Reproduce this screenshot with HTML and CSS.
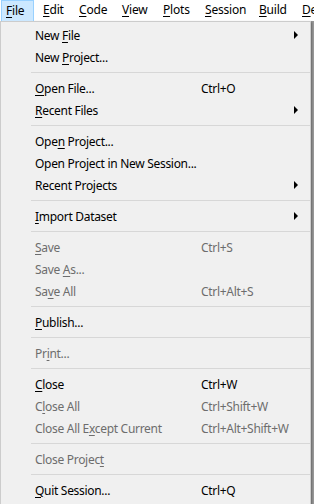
FILE: index.html
```html
<!DOCTYPE html>
<html>
<head>
<meta charset="utf-8">
<link rel="stylesheet" href="styles.css">
</head>
<body>
<div class="menubar">
  <div class="mi mi-file active"><u>F</u>ile</div>
  <div class="mi mi-edit"><u>E</u>dit</div>
  <div class="mi mi-code"><u>C</u>ode</div>
  <div class="mi mi-view"><u>V</u>iew</div>
  <div class="mi mi-plots"><u>P</u>lots</div>
  <div class="mi mi-session"><u>S</u>ession</div>
  <div class="mi mi-build"><u>B</u>uild</div>
  <div class="mi mi-debug"><u>D</u>ebug</div>
</div>
<div class="workspace">
  <div class="dropdown">
    <div class="item"><span class="label">New <u>F</u>ile</span><span class="key"></span><span class="arrow"></span></div>
    <div class="item"><span class="label">New <u>P</u>roject...</span><span class="key"></span><span></span></div>
    <div class="sep"></div>
    <div class="item"><span class="label"><u>O</u>pen File...</span><span class="key">Ctrl+O</span><span></span></div>
    <div class="item"><span class="label"><u>R</u>ecent Files</span><span class="key"></span><span class="arrow"></span></div>
    <div class="sep"></div>
    <div class="item"><span class="label">Ope<u>n</u> Project...</span><span class="key"></span><span></span></div>
    <div class="item"><span class="label">Open Project in New Session...</span><span class="key"></span><span></span></div>
    <div class="item"><span class="label">Recent Projects</span><span class="key"></span><span class="arrow"></span></div>
    <div class="sep"></div>
    <div class="item"><span class="label"><u>I</u>mport Dataset</span><span class="key"></span><span class="arrow"></span></div>
    <div class="sep"></div>
    <div class="item disabled"><span class="label"><u>S</u>ave</span><span class="key">Ctrl+S</span><span></span></div>
    <div class="item disabled"><span class="label">Save <u>A</u>s...</span><span class="key"></span><span></span></div>
    <div class="item disabled"><span class="label">Sa<u>v</u>e All</span><span class="key">Ctrl+Alt+S</span><span></span></div>
    <div class="sep"></div>
    <div class="item"><span class="label"><u>P</u>ublish...</span><span class="key"></span><span></span></div>
    <div class="sep"></div>
    <div class="item disabled"><span class="label">Pr<u>i</u>nt...</span><span class="key"></span><span></span></div>
    <div class="sep"></div>
    <div class="item"><span class="label"><u>C</u>lose</span><span class="key">Ctrl+W</span><span></span></div>
    <div class="item disabled"><span class="label">C<u>l</u>ose All</span><span class="key">Ctrl+Shift+W</span><span></span></div>
    <div class="item disabled"><span class="label">Close All E<u>x</u>cept Current</span><span class="key">Ctrl+Alt+Shift+W</span><span></span></div>
    <div class="sep"></div>
    <div class="item disabled"><span class="label">Close Projec<u>t</u></span><span class="key"></span><span></span></div>
    <div class="sep"></div>
    <div class="item"><span class="label"><u>Q</u>uit Session...</span><span class="key">Ctrl+Q</span><span></span></div>
    <div class="item"><span class="label">&nbsp;</span><span class="key"></span><span></span></div>
  </div>
</div>
</body>
</html>
```
FILE: styles.css
```css
html, body {
  margin: 0;
  padding: 0;
  width: 314px;
  height: 504px;
  overflow: hidden;
  background: #9a9a9a;
  font-family: "Noto Sans", "Open Sans", sans-serif;
  font-size: 12px;
  color: #000;
}

u {
  text-decoration: underline;
  text-underline-offset: 2px;
  text-decoration-thickness: 1px;
}

.menubar {
  display: flex;
  height: 21px;
  background: #fff;
  white-space: nowrap;
  overflow: hidden;
  letter-spacing: -0.2px;
}

.mi {
  flex: none;
  box-sizing: border-box;
  height: 21px;
  line-height: 20px;
  padding-left: 6px;
}

.mi.active {
  margin-left: 1px;
  margin-right: 3px;
  height: 21px;
  padding-left: 4px;
  background: #cce8ff;
  border: 1px solid #99d1ff;
  border-bottom: none;
  line-height: 19px;
}

.mi-file { width: 33px; }
.mi-edit { width: 36px; }
.mi-code { width: 43px; }
.mi-view { width: 41px; }
.mi-plots { width: 42px; }
.mi-session { width: 54px; }
.mi-build { width: 43px; }

.workspace {
  height: 483px;
  background: #9a9a9a;
}

.dropdown {
  box-sizing: border-box;
  width: 311px;
  border: 1px solid #cccccc;
  background: #f0f0f0;
  padding: 2px 0 0 0;
  box-shadow: 1px 1px 2px rgba(0, 0, 0, 0.35);
  letter-spacing: -0.3px;
}

.item {
  display: grid;
  grid-template-columns: 166px 1fr 16px;
  align-items: center;
  height: 22px;
  padding-left: 34px;
  white-space: nowrap;
}

.item.disabled {
  color: #6d6d6d;
}

.arrow {
  width: 0;
  height: 0;
  border-left: 4px solid #000;
  border-top: 4px solid transparent;
  border-bottom: 4px solid transparent;
}

.sep {
  height: 1px;
  margin: 4px 0 4px 30px;
  background: #d7d7d7;
}
```
